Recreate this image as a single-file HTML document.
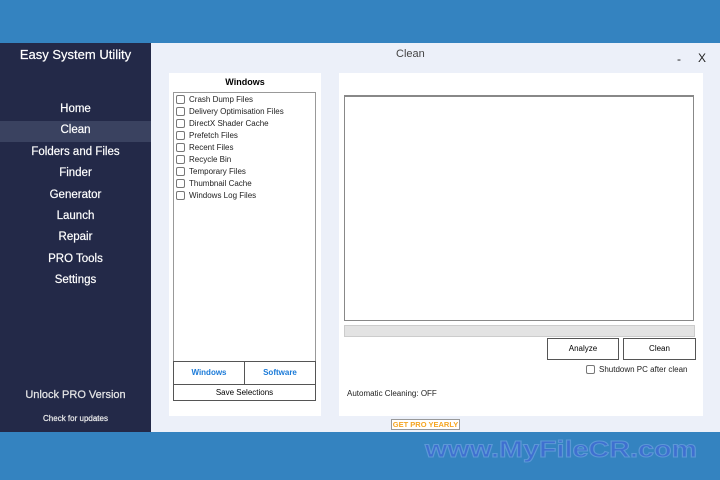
<!DOCTYPE html>
<html><head><meta charset="utf-8"><style>
*{margin:0;padding:0;box-sizing:border-box}
body{width:720px;height:480px;background:#3483c0;font-family:"Liberation Sans",sans-serif;position:relative;overflow:hidden}
.abs{position:absolute}
#side{left:0;top:43px;width:151px;height:389px;background:#232948;color:#fff}
#main{left:151px;top:43px;width:569px;height:389px;background:#ecf0f9}
.nav{position:absolute;left:0;width:151px;text-align:center;font-size:11.5px;color:#fff;-webkit-text-stroke:0.2px #fff}
.cb{display:inline-block;width:9px;height:9px;border:1px solid #777;border-radius:2px;background:#fff;vertical-align:middle;margin-right:4px}
.item{position:absolute;left:176px;font-size:8px;color:#222;height:12px;line-height:12px}
.btn{position:absolute;border:1px solid #555;background:#fff;font-size:8px;text-align:center}
</style></head><body>
<div id="side" class="abs">
<div class="nav" style="top:4px;font-size:13px;">Easy System Utility</div>
<div class="nav" style="top:60px">Home</div>
<div class="abs" style="left:0;top:78px;width:151px;height:21px;background:#3a4260"></div>
<div class="nav" style="top:81px">Clean</div>
<div class="nav" style="top:103px">Folders and Files</div>
<div class="nav" style="top:124px">Finder</div>
<div class="nav" style="top:146px">Generator</div>
<div class="nav" style="top:167px">Launch</div>
<div class="nav" style="top:188px">Repair</div>
<div class="nav" style="top:210px">PRO Tools</div>
<div class="nav" style="top:231px">Settings</div>
<div class="nav" style="top:346px;font-size:11px;color:#ddd">Unlock PRO Version</div>
<div class="nav" style="top:371px;font-size:8px;color:#ddd">Check for updates</div>
</div>
<div id="main" class="abs"></div>
<div class="abs" style="left:396px;top:48px;font-size:11px;color:#444">Clean</div>
<div class="abs" style="left:677px;top:52px;font-size:12px;color:#222">-</div>
<div class="abs" style="left:698px;top:51px;font-size:12px;color:#222">X</div>
<div class="abs" style="left:169px;top:73px;width:152px;height:343px;background:#fff"></div>
<div class="abs" style="left:169px;top:77px;width:152px;text-align:center;font-size:9px;font-weight:bold">Windows</div>
<div class="abs" style="left:173px;top:92px;width:143px;height:270px;border:1px solid #999"></div>
<div class="item" style="top:94px"><span class="cb"></span>Crash Dump Files</div>
<div class="item" style="top:106px"><span class="cb"></span>Delivery Optimisation Files</div>
<div class="item" style="top:118px"><span class="cb"></span>DirectX Shader Cache</div>
<div class="item" style="top:130px"><span class="cb"></span>Prefetch Files</div>
<div class="item" style="top:142px"><span class="cb"></span>Recent Files</div>
<div class="item" style="top:154px"><span class="cb"></span>Recycle Bin</div>
<div class="item" style="top:166px"><span class="cb"></span>Temporary Files</div>
<div class="item" style="top:178px"><span class="cb"></span>Thumbnail Cache</div>
<div class="item" style="top:190px"><span class="cb"></span>Windows Log Files</div>
<div class="btn" style="left:173px;top:361px;width:72px;height:24px;line-height:22px;color:#1a7ad8;font-weight:bold">Windows</div>
<div class="btn" style="left:244px;top:361px;width:72px;height:24px;line-height:22px;color:#1a7ad8;font-weight:bold">Software</div>
<div class="btn" style="left:173px;top:384px;width:143px;height:17px;line-height:15px">Save Selections</div>
<div class="abs" style="left:339px;top:73px;width:364px;height:343px;background:#fff"></div>
<div class="abs" style="left:344px;top:95px;width:350px;height:226px;border:1px solid #888;border-top:2px solid #888"></div>
<div class="abs" style="left:344px;top:325px;width:351px;height:12px;background:#e3e3e3;border:1px solid #ccc"></div>
<div class="btn" style="left:547px;top:338px;width:72px;height:22px;line-height:20px">Analyze</div>
<div class="btn" style="left:623px;top:338px;width:73px;height:22px;line-height:20px">Clean</div>
<div class="abs" style="left:586px;top:365px;font-size:8px;color:#222"><span class="cb"></span>Shutdown PC after clean</div>
<div class="abs" style="left:347px;top:389px;font-size:8px;color:#222">Automatic Cleaning: OFF</div>
<div class="abs" style="left:391px;top:419px;width:69px;height:11px;border:1px solid #999;background:#fff;color:#f5a623;font-size:7.5px;font-weight:bold;text-align:center;line-height:9px">GET PRO YEARLY</div>
<div class="abs" style="left:425px;top:436px;font-size:23px;font-weight:bold;color:#3f6fd0;-webkit-text-stroke:1px #5c98d6;transform:scaleX(1.25);transform-origin:0 0;white-space:nowrap">www.MyFileCR.com</div>
</body></html>
